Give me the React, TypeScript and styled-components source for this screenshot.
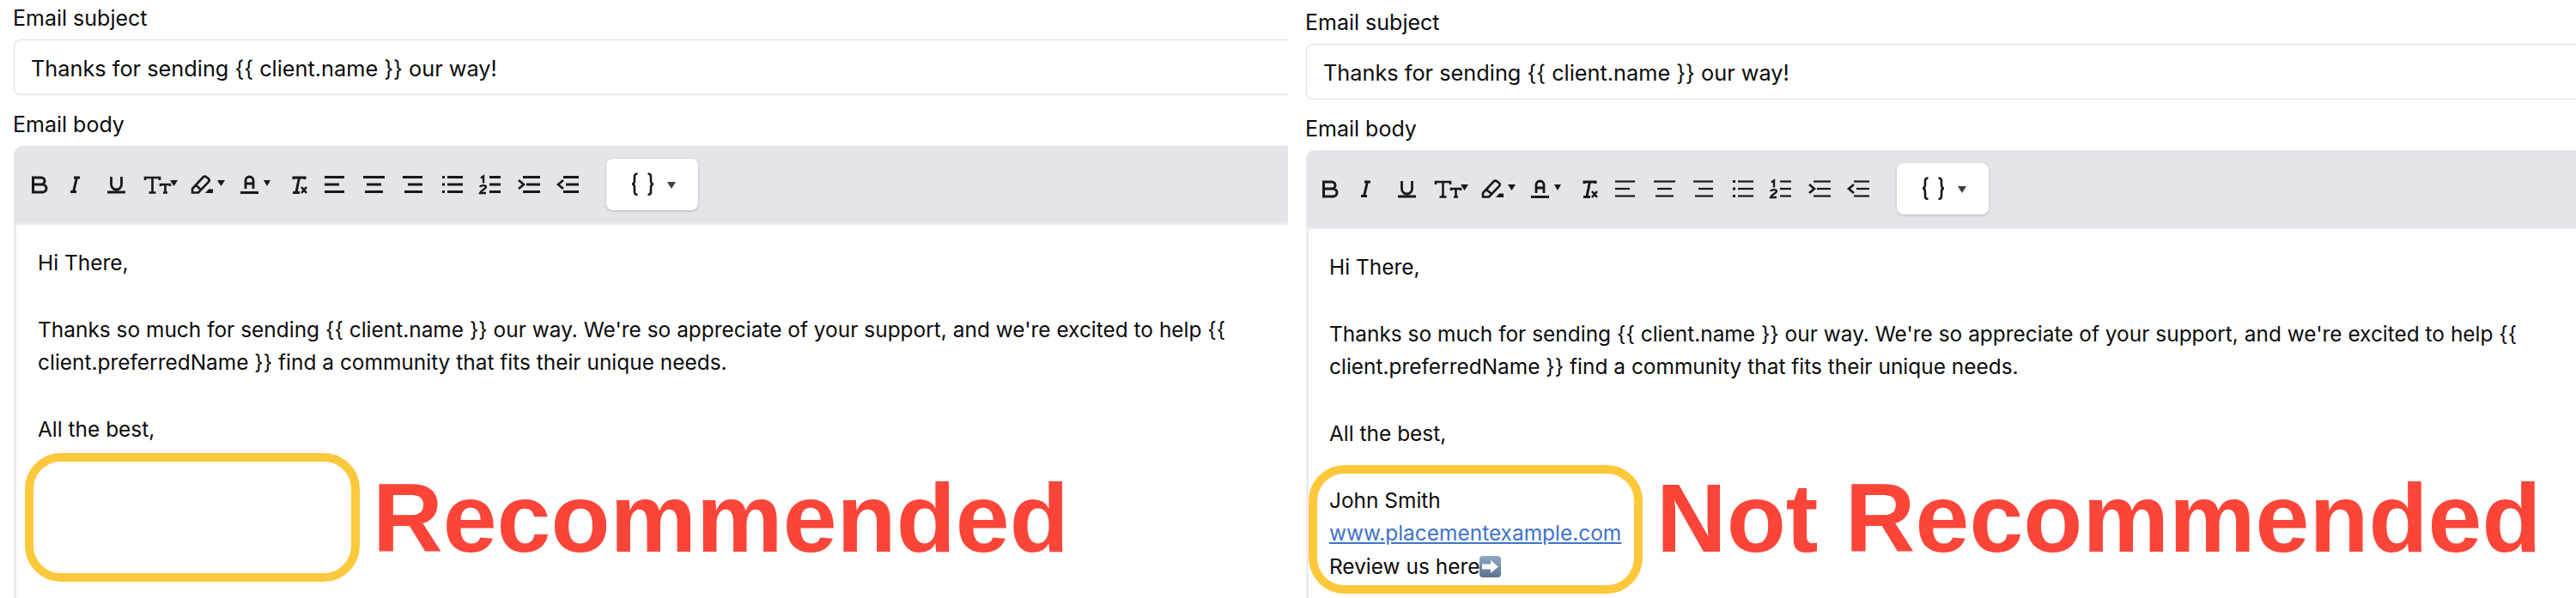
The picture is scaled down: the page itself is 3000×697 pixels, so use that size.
import React from 'react';
import styled, { createGlobalStyle } from 'styled-components';

const Global = createGlobalStyle`
  html, body { margin: 0; padding: 0; background: #fff; }
  body { width: 3000px; height: 697px; overflow: hidden; font-family: Inter, "Liberation Sans", sans-serif; color: #0c0c0c; }
`;

const Page = styled.div`
  display: flex;
  width: 3000px;
  height: 697px;
  overflow: hidden;
  background: #fff;
`;

const Panel = styled.section<{ $top: number; $left: number }>`
  position: relative;
  flex: none;
  box-sizing: border-box;
  width: 1500px;
  height: 697px;
  padding: ${p => p.$top}px 0 0 ${p => p.$left}px;
  overflow: hidden;
`;

const Label = styled.div`
  font-size: 25px;
  line-height: 19px;
  height: 34px;
  margin-left: -1px;
`;

const Input = styled.div`
  box-sizing: border-box;
  height: 65px;
  margin: 0 0 25px;
  border: 1.5px solid #dcdee1;
  border-right: 0;
  border-radius: 8px 0 0 8px;
  padding-left: 19px;
  font-size: 25.3px;
  line-height: 65px;
  white-space: nowrap;
`;

const Toolbar = styled.div<{ $inset: number }>`
  display: flex;
  align-items: center;
  box-sizing: border-box;
  height: 92px;
  background: #e4e5e9;
  border-radius: 10px 0 0 0;
  border-bottom: 3px solid #e9eaed;
  padding-left: ${p => p.$inset}px;
`;

const Tool = styled.svg<{ $w: number; $ml: number }>`
  flex: none;
  width: ${p => p.$w}px;
  height: 24px;
  margin-left: ${p => p.$ml}px;
  color: #18181a;
  overflow: visible;
`;

const VarButton = styled.div`
  flex: none;
  display: flex;
  align-items: center;
  box-sizing: border-box;
  width: 107px;
  height: 60px;
  margin-left: 32px;
  padding-left: 29px;
  background: #fff;
  border-radius: 8px;
  box-shadow: 0 1px 3px rgba(60, 64, 80, .3);
`;

const Editor = styled.div<{ $inset: number }>`
  box-sizing: border-box;
  height: 450px;
  width: 1500px;
  border-left: 3px solid #ebecee;
  padding: 25px 0 0 ${p => p.$inset}px;
  font-size: 24.44px;
  line-height: 38.8px;
`;

const Line = styled.div`
  min-height: 38.8px;
  white-space: nowrap;
`;

const SiteLink = styled.a`
  color: #3f74c9;
  text-decoration: underline;
`;

const Emoji = styled.svg`
  width: 25px;
  height: 25px;
  vertical-align: -4px;
`;

const Ring = styled.div<{ $x: number; $y: number; $w: number }>`
  position: absolute;
  left: ${p => p.$x}px;
  top: ${p => p.$y}px;
  box-sizing: border-box;
  width: ${p => p.$w}px;
  height: 150px;
  border: 10px solid #fdc83c;
  border-radius: 42px;
`;

const Verdict = styled.div<{ $x: number }>`
  position: absolute;
  left: ${p => p.$x}px;
  top: 539px;
  font-family: "Liberation Sans", Arial, sans-serif;
  font-weight: 700;
  font-size: 113.1px;
  line-height: 130px;
  color: #fb4539;
  white-space: nowrap;
`;

const S = { fill: 'none', stroke: 'currentColor', strokeWidth: 2.6, strokeLinecap: 'butt' as const };

const Caret = ({ ml = 0, w = 9 }: { ml?: number; w?: number }) => (
  <Tool $w={w} $ml={ml} viewBox={`0 0 ${w} 24`}><path d={`M0 7h${w}l-${w / 2} 7z`} fill="currentColor" /></Tool>
);

const Lines = ({ rows, weight }: { rows: number[][]; weight: number }) => (
  <>{rows.map(([a, b], i) => <path key={i} d={`M${a} ${3.5 + i * 8.5}H${b}`} {...S} strokeWidth={weight} />)}</>
);

const ToolRow = ({ weight }: { weight: number }) => (
  <>
    <Tool $w={18} $ml={0} viewBox="0 0 18 24"><path d="M1.500 4h9.500a4 4 0 0 1 0 8H1.500zM1.500 12h11a4.500 4.500 0 0 1 0 9H1.500z" {...S} strokeWidth={3} /></Tool>
    <Tool $w={11} $ml={27} viewBox="0 0 11 24"><path d="M4 4h7M0 20.500h7M7.500 4 3.500 20.500" {...S} strokeWidth={3} /></Tool>
    <Tool $w={21} $ml={32} viewBox="0 0 21 24"><path d="M4.500 3v9a6 6 0 0 0 12 0V3M0 21h21" {...S} strokeWidth={2.8} /></Tool>
    <Tool $w={30} $ml={22} viewBox="0 0 30 24"><path d="M1 7V4h17v3M9.500 4v17M5.500 21.500h8M19 14v-2h11v2M24.500 12v9.500M22 21.500h5" {...S} strokeWidth={2.6} /></Tool>
    <Caret />
    <Tool $w={27} $ml={15} viewBox="0 0 27 24"><path d="M2 17 14.500 3.500a3 3 0 0 1 4 0l2 1.500a3 3 0 0 1 .5 4L9 21.500H2zM5.500 12.500l6 5" {...S} /><path d="M17 22l4-4.500h5v4.500z" fill="currentColor" /></Tool>
    <Caret ml={4} />
    <Tool $w={21} $ml={18} viewBox="0 0 21 24"><path d="M6 17V7.500a4.500 4.500 0 0 1 9 0V17M6 11h9M0 21.500h21" {...S} strokeWidth={2.8} /></Tool>
    <Caret ml={6} w={8} />
    <Tool $w={21} $ml={22} viewBox="0 0 21 24"><path d="M5 6V4h13v2M11.500 4 8 21M4 21.500h8" {...S} strokeWidth={3} /><path d="m14 15 6 7m0-7-6 7" {...S} strokeWidth={2.6} /></Tool>
    <Tool $w={23} $ml={20} viewBox="0 0 23 24"><Lines weight={weight} rows={[[0, 23], [0, 17], [0, 23]]} /></Tool>
    <Tool $w={25} $ml={22} viewBox="0 0 25 24"><Lines weight={weight} rows={[[0, 25], [4, 21], [2, 23]]} /></Tool>
    <Tool $w={23} $ml={21} viewBox="0 0 23 24"><Lines weight={weight} rows={[[0, 23], [6, 23], [2, 23]]} /></Tool>
    <Tool $w={24} $ml={23} viewBox="0 0 24 24">
      <Lines weight={weight} rows={[[6, 24], [6, 24], [6, 24]]} />
      <path d="M0 3.500h3M0 12h3M0 20.500h3" {...S} strokeWidth={3} />
    </Tool>
    <Tool $w={25} $ml={19} viewBox="0 0 25 24">
      <Lines weight={weight} rows={[[12, 25], [12, 25], [12, 25]]} />
      <path d="M2 4.500l3-2v8M1 15c1-2.500 7-2.500 7 0 0 2-6 3.500-7 7h7" {...S} strokeWidth={2.4} />
    </Tool>
    <Tool $w={25} $ml={21} viewBox="0 0 25 24">
      <Lines weight={weight} rows={[[5, 25], [9, 25], [5, 25]]} />
      <path d="m0 7 6 5-6 5" {...S} strokeWidth={2.6} />
    </Tool>
    <Tool $w={24} $ml={21} viewBox="0 0 24 24">
      <Lines weight={weight} rows={[[6, 24], [9, 24], [6, 24]]} />
      <path d="M6 7 0 12l6 5" {...S} strokeWidth={2.6} />
    </Tool>
    <VarButton>
      <Tool $w={27} $ml={0} viewBox="0 0 27 24">
        <path d="M7.500-.5C3.500-.5 4 2 4 5.500S4 11.500 1 11.500c3 0 3 3 3 6.500s-.5 6 3.500 6M19.500-.5c4 0 3.500 2.500 3.500 6s0 6 3 6c-3 0-3 3-3 6.500s.5 6-3.500 6" {...S} strokeWidth={2.6} />
      </Tool>
      <Tool $w={10} $ml={15} viewBox="0 0 10 24"><path d="M0 9h10l-5 8z" fill="#3c3f45" /></Tool>
    </VarButton>
  </>
);

const ArrowEmoji = () => (
  <Emoji viewBox="0 0 25 25">
    <defs>
      <linearGradient id="arrowTile" x1="0" y1="0" x2="0" y2="1">
        <stop offset="0" stopColor="#8fa8c6" />
        <stop offset="1" stopColor="#5b7390" />
      </linearGradient>
    </defs>
    <rect width="25" height="25" rx="4" fill="url(#arrowTile)" />
    <path d="M3 9.500h10V5l9 7.500-9 7.500v-4.500H3z" fill="#fff" />
  </Emoji>
);

const Form = ({ children, toolInset, textInset, weight }: { children?: React.ReactNode; toolInset: number; textInset: number; weight: number }) => (
  <>
    <Label>Email subject</Label>
    <Input>Thanks for sending {'{{'} client.name {'}}'} our way!</Input>
    <Label>Email body</Label>
    <Toolbar $inset={toolInset}><ToolRow weight={weight} /></Toolbar>
    <Editor $inset={textInset}>
      <Line>Hi There,</Line>
      <Line />
      <Line>Thanks so much for sending {'{{'} client.name {'}}'} our way. We're so appreciate of your support, and we're excited to help {'{{'}</Line>
      <Line>client.preferredName {'}}'} find a community that fits their unique needs.</Line>
      <Line />
      <Line>All the best,</Line>
      {children}
    </Editor>
  </>
);

export default function App() {
  return (
    <Page>
      <Global />
      <Panel $top={12} $left={16}>
        <Form toolInset={21} textInset={25} weight={3}>
        </Form>
        <Ring $x={29} $y={528} $w={390} />
        <Verdict $x={434}>Recommended</Verdict>
      </Panel>
      <Panel $top={17} $left={21}>
        <Form toolInset={19} textInset={24} weight={2.2}>
          <Line />
          <Line>John Smith</Line>
          <Line><SiteLink>www.placementexample.com</SiteLink></Line>
          <Line>Review us here<ArrowEmoji /></Line>
        </Form>
        <Ring $x={24} $y={542} $w={389} />
        <Verdict $x={429}>Not Recommended</Verdict>
      </Panel>
    </Page>
  );
}
